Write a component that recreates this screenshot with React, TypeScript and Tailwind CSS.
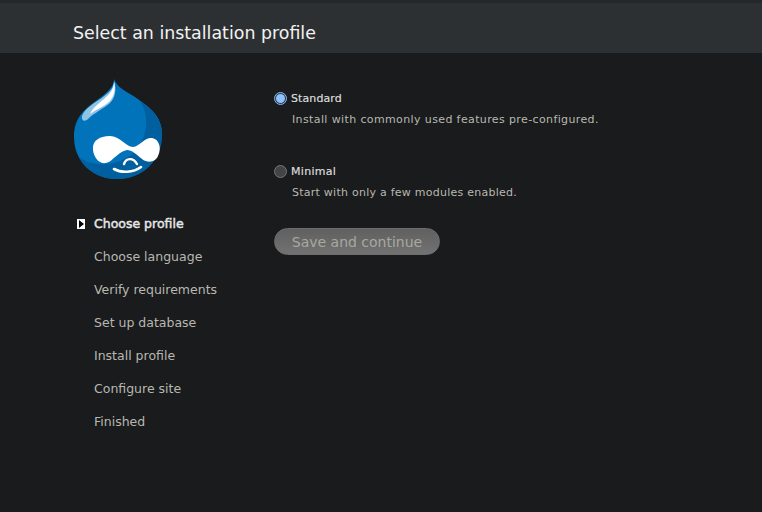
const steps = [
  "Choose language",
  "Verify requirements",
  "Set up database",
  "Install profile",
  "Configure site",
  "Finished",
];

function DrupalLogo() {
  return (
    <svg width="90" height="102" viewBox="0 0 90 102" className="block">
      <path
        d="M41 0 C41 7 36 12 27 19 C13 29 1 37 1 58 C1 83 20 100 44 100 C69 100 89 82 89 55 C89 36 75 27 62 18 C52 12 44 8 41 0 Z"
        fill="#0073ba"
      />
      <path
        d="M67 22 C79 30 89 40 89 55 C89 82 69 100 44 100 C28 100 14 93 6 78 C20 88 40 88 58 76 C74 64 78 38 67 22 Z"
        fill="#00609f"
      />
      <path
        d="M41 2 C41 8 37 13 30 18 C23 23 12 29 9 37 C8 42 12 43 15 40 C21 34 30 30 37 24 C42 19 44 11 41 2 Z"
        fill="#8fc3e6"
      />
      <path
        d="M41 3 C41 9 38 14 33 18 C28 23 20 28 17 35 C24 30 32 27 37 22 C41 17 43 10 41 3 Z"
        fill="#ffffff"
      />
      <path
        d="M20 71 C19 62 26 57 37 57 C47 57 53 68 60 68 C67 67 72 58 79 59 C86 60 89 69 85 77 C82 84 74 84 69 80 C63 75 59 71 54 71 C47 72 42 79 36 83 C28 87 21 80 20 71 Z"
        fill="#ffffff"
      />
      <path
        d="M41 90 C48 94 60 94 68 88"
        fill="none"
        stroke="#ffffff"
        strokeWidth="2.6"
        strokeLinecap="round"
      />
      <path
        d="M51 85 C53 79 60 78 64 85"
        fill="none"
        stroke="#ffffff"
        strokeWidth="2.4"
        strokeLinecap="round"
      />
    </svg>
  );
}

function Radio({ checked }: { checked?: boolean }) {
  return (
    <span
      className={
        checked
          ? "flex h-[13px] w-[13px] items-center justify-center rounded-full border border-[#8ab4e8] bg-[#2b3a4d]"
          : "h-[13px] w-[13px] rounded-full border border-[#777777] bg-[#444444]"
      }
    >
      {checked && <span className="h-[9px] w-[9px] rounded-full bg-[#8fc1ff]" />}
    </span>
  );
}

export default function App() {
  return (
    <div className="h-[512px] w-[762px] overflow-hidden bg-[#1a1b1d] font-['DejaVu_Sans',sans-serif]">
      <header className="flex h-[53px] items-center border-t-[3px] border-[#24282b] bg-[#2d3033] pl-[73px] pt-[12px]">
        <h1 className="text-[17.4px] leading-none text-[#f2f2f2]">Select an installation profile</h1>
      </header>

      <div className="flex">
        <aside className="w-[274px] shrink-0 pl-[73px] pt-[26px]">
          <DrupalLogo />
          <ol className="mt-[26px] text-[12.5px] leading-[33px] text-[#b8b8b0]">
            <li className="relative pl-[21px] text-[#e8e8e8] [-webkit-text-stroke:0.45px_#e8e8e8]">
              <span className="absolute left-[4px] top-[12px] flex h-[10px] w-[8px] items-center bg-white pl-[2px]">
                <span className="border-y-[4px] border-l-[5px] border-y-transparent border-l-black" />
              </span>
              Choose profile
            </li>
            {steps.map((step) => (
              <li key={step} className="pl-[21px]">
                {step}
              </li>
            ))}
          </ol>
        </aside>

        <main className="pt-[38px] text-[#b8b8b0]">
          <label className="flex items-center gap-[4px] text-[11px] leading-[14px] tracking-[0.1px] text-[#dcdcdc]">
            <Radio checked />
            <span className="pt-[1px] [-webkit-text-stroke:0.2px_#dcdcdc]">Standard</span>
          </label>
          <p className="mt-[7px] pl-[18px] text-[11px] leading-[14px] tracking-[0.38px]">
            Install with commonly used features pre-configured.
          </p>

          <label className="mt-[37px] flex items-center gap-[4px] text-[11px] leading-[14px] tracking-[0.3px] text-[#dcdcdc]">
            <Radio />
            <span className="pt-[1px] [-webkit-text-stroke:0.2px_#dcdcdc]">Minimal</span>
          </label>
          <p className="mt-[7px] pl-[18px] text-[11px] leading-[14px] tracking-[0.25px]">
            Start with only a few modules enabled.
          </p>

          <button
            type="button"
            disabled
            className="mt-[28px] h-[27px] w-[166px] rounded-[14px] border border-[#6e6e6e] bg-[linear-gradient(#606060,#727272)] pt-[2px] text-[14px] text-[#a8a8a0]"
          >
            Save and continue
          </button>
        </main>
      </div>
    </div>
  );
}
